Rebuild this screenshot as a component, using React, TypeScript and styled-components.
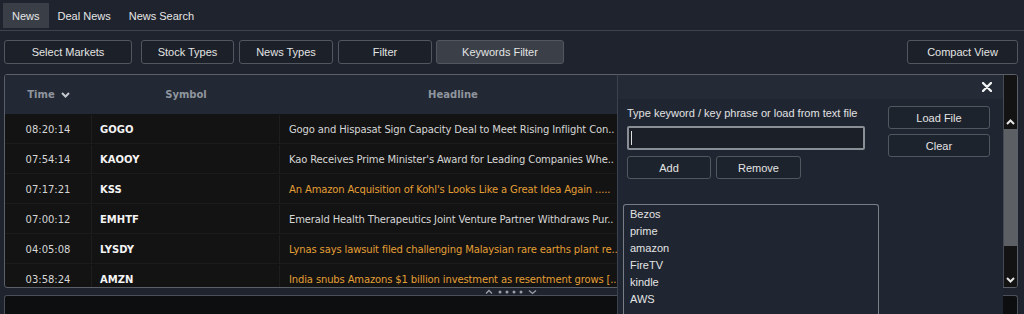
import React from "react";
import styled, { createGlobalStyle } from "styled-components";

const GlobalStyle = createGlobalStyle`
  html, body { margin: 0; padding: 0; background: #1e232d; overflow: hidden; }
  body { font-family: "Liberation Sans", Arial, sans-serif; }
  * { box-sizing: border-box; }
`;

const Page = styled.div`
  position: relative;
  width: 1024px;
  height: 314px;
  display: flex;
  flex-direction: column;
  background: #1e232d;
  overflow: hidden;
`;

const TabBar = styled.div`
  display: flex;
  height: 31px;
  padding: 3px 3px 0;
  border-bottom: 1px solid #3d434d;
`;

const Tab = styled.div<{ $active?: boolean }>`
  height: 25px;
  padding: 0 9px;
  display: flex;
  align-items: center;
  font-size: 11px;
  color: #e6e6e6;
  background: ${(p) => (p.$active ? "#3a3e46" : "transparent")};
`;

const Toolbar = styled.div`
  display: flex;
  gap: 5px;
  height: 24px;
  margin-top: 9px;
  padding: 0 6px 0 4px;
`;

const ToolButton = styled.div<{ $w: number; $active?: boolean; $push?: boolean; $extra?: number }>`
  width: ${(p) => p.$w}px;
  height: 24px;
  display: flex;
  align-items: center;
  justify-content: center;
  border: 1px solid #51565f;
  border-radius: 3px;
  background: ${(p) => (p.$active ? "#3a3f48" : "#1b2029")};
  color: #e4e4e4;
  font-size: 11px;
  margin-left: ${(p) => (p.$push ? "auto" : "0")};
  margin-right: ${(p) => p.$extra ?? 0}px;
`;

const TablePanel = styled.div`
  display: flex;
  height: 214px;
  margin: 10px 6px 0 4px;
  border: 1px solid #5a5f68;
  border-radius: 3px;
  background: #131313;
  overflow: hidden;
`;

const TableMain = styled.div`
  flex: 1;
  display: flex;
  flex-direction: column;
  overflow: hidden;
`;

const cols = "87px 188px 346px 1fr";

const HeaderRow = styled.div`
  display: grid;
  grid-template-columns: ${cols};
  height: 39px;
  flex-shrink: 0;
  background: #232934;
  align-items: center;
  font-family: "DejaVu Sans", Verdana, sans-serif;
  font-weight: bold;
  font-size: 10px;
  color: #8f959e;
`;

const HeaderCell = styled.div`
  display: flex;
  align-items: center;
  justify-content: center;
  gap: 6px;
`;

const Row = styled.div`
  display: grid;
  grid-template-columns: ${cols};
  height: 30px;
  flex-shrink: 0;
  padding-top: 1px;
  border-bottom: 1px solid #1b1b1b;
  font-family: "DejaVu Sans", Verdana, sans-serif;
  font-size: 10px;
`;

const Cell = styled.div<{ $align?: string; $pad?: number; $bold?: boolean; $color?: string; $sep?: boolean }>`
  display: flex;
  align-items: center;
  justify-content: ${(p) => p.$align ?? "flex-start"};
  padding-left: ${(p) => p.$pad ?? 0}px;
  font-weight: ${(p) => (p.$bold ? "bold" : "normal")};
  color: ${(p) => p.$color ?? "#d6d6d6"};
  border-right: ${(p) => (p.$sep ? "1px solid #1e1e1e" : "none")};
  white-space: nowrap;
`;

const HeadlineCell = styled.div<{ $color: string }>`
  padding-left: 9px;
  line-height: 29px;
  letter-spacing: -0.14px;
  color: ${(p) => p.$color};
  white-space: nowrap;
`;

const Scrollbar = styled.div`
  width: 14px;
  flex-shrink: 0;
  display: flex;
  flex-direction: column;
  border-left: 1px solid #454a53;
  background: #131313;
`;

const ScrollCorner = styled.div`
  height: 39px;
`;

const ScrollArrow = styled.div`
  height: 15px;
  display: flex;
  align-items: center;
  justify-content: center;
`;

const ScrollThumb = styled.div`
  height: 117px;
  background: #5c5f64;
`;

const ScrollTrack = styled.div`
  flex: 1;
`;

const Splitter = styled.div`
  height: 7px;
  display: flex;
  align-items: center;
  justify-content: center;
  margin: 0 6px 0 4px;
`;

const BottomPanel = styled.div`
  flex: 1;
  margin: 0 6px 0 4px;
  border: 1px solid #4a4f58;
  border-bottom: none;
  border-radius: 3px 3px 0 0;
  background: #0d0e10;
`;

const Popup = styled.div`
  position: absolute;
  left: 617px;
  top: 74px;
  width: 386px;
  bottom: 0;
  display: flex;
  flex-direction: column;
  background: #1f2632;
  border-left: 1px solid #3b4350;
  border-top: 1px solid #5a5f68;
`;

const PopupHeader = styled.div`
  height: 24px;
  display: flex;
  align-items: center;
  justify-content: flex-end;
  padding-right: 11px;
  background: #242b37;
`;

const PopupBody = styled.div`
  flex: 1;
  display: flex;
  flex-direction: column;
`;

const TopSection = styled.div`
  display: flex;
  padding: 7px 0 0 9px;
`;

const LeftCol = styled.div`
  width: 238px;
  display: flex;
  flex-direction: column;
`;

const Label = styled.div`
  font-size: 11px;
  line-height: 14px;
  color: #e2e2e2;
  white-space: nowrap;
`;

const InputBox = styled.div`
  height: 24px;
  margin-top: 6px;
  border: 2px solid #8a8e95;
  border-radius: 2px;
  background: #1a1f28;
  display: flex;
  align-items: center;
  padding-left: 2px;
`;

const Caret = styled.span`
  width: 1px;
  height: 14px;
  background: #e0e0e0;
`;

const ButtonRow = styled.div`
  display: flex;
  gap: 5px;
  margin-top: 6px;
`;

const PanelButton = styled.div<{ $w: number }>`
  width: ${(p) => p.$w}px;
  height: 23px;
  display: flex;
  align-items: center;
  justify-content: center;
  border: 1px solid #51565f;
  border-radius: 3px;
  background: #1d232d;
  color: #e4e4e4;
  font-size: 11px;
`;

const RightCol = styled.div`
  margin-left: 23px;
  display: flex;
  flex-direction: column;
  gap: 5px;
`;

const ListBox = styled.div`
  flex: 1;
  width: 256px;
  margin: 25px 0 0 5px;
  padding: 1px 6px;
  border: 1px solid #787d86;
  border-bottom: none;
  border-radius: 3px 3px 0 0;
  background: #1f2632;
`;

const ListItem = styled.div`
  font-size: 11px;
  line-height: 17px;
  color: #e4e4e4;
`;

const Chevron = ({ up, color = "#d0d4da" }: { up?: boolean; color?: string }) => (
  <svg width="9" height="6" viewBox="0 0 9 6">
    <polyline
      points={up ? "1,5 4.5,1.5 8,5" : "1,1 4.5,4.5 8,1"}
      fill="none"
      stroke={color}
      strokeWidth="2"
    />
  </svg>
);

const CloseIcon = () => (
  <svg width="10" height="10" viewBox="0 0 10 10">
    <path d="M1,1 L9,9 M9,1 L1,9" stroke="#f2f2f2" strokeWidth="2.4" strokeLinecap="round" />
  </svg>
);

const SplitIcon = () => (
  <svg width="52" height="7" viewBox="0 0 52 7">
    <polyline points="1,5.5 4,2.5 7,5.5" fill="none" stroke="#9aa0a8" strokeWidth="1.3" />
    <circle cx="15" cy="4" r="1.5" fill="#9aa0a8" />
    <circle cx="22" cy="4" r="1.5" fill="#9aa0a8" />
    <circle cx="29" cy="4" r="1.5" fill="#9aa0a8" />
    <circle cx="36" cy="4" r="1.5" fill="#9aa0a8" />
    <polyline points="44,2.5 47.5,5.5 51,2.5" fill="none" stroke="#9aa0a8" strokeWidth="1.3" />
  </svg>
);

const WHITE = "#d6d6d6";
const ORANGE = "#e39f35";

const rows = [
  { t: "08:20:14", s: "GOGO", h: "Gogo and Hispasat Sign Capacity Deal to Meet Rising Inflight Con..", c: WHITE },
  { t: "07:54:14", s: "KAOOY", h: "Kao Receives Prime Minister's Award for Leading Companies Whe..", c: WHITE },
  { t: "07:17:21", s: "KSS", h: "An Amazon Acquisition of Kohl's Looks Like a Great Idea Again .....", c: ORANGE },
  { t: "07:00:12", s: "EMHTF", h: "Emerald Health Therapeutics Joint Venture Partner Withdraws Pur..", c: WHITE },
  { t: "04:05:08", s: "LYSDY", h: "Lynas says lawsuit filed challenging Malaysian rare earths plant re..", c: ORANGE },
  { t: "03:58:24", s: "AMZN", h: "India snubs Amazons $1 billion investment as resentment grows [..", c: ORANGE },
];

const keywords = ["Bezos", "prime", "amazon", "FireTV", "kindle", "AWS"];

export default function App() {
  return (
    <>
      <GlobalStyle />
      <Page>
        <TabBar>
          <Tab $active>News</Tab>
          <Tab>Deal News</Tab>
          <Tab>News Search</Tab>
        </TabBar>
        <Toolbar>
          <ToolButton $w={128} $extra={4}>Select Markets</ToolButton>
          <ToolButton $w={93}>Stock Types</ToolButton>
          <ToolButton $w={94}>News Types</ToolButton>
          <ToolButton $w={94} $extra={-1}>Filter</ToolButton>
          <ToolButton $w={128} $active>Keywords Filter</ToolButton>
          <ToolButton $w={111} $push>Compact View</ToolButton>
        </Toolbar>
        <TablePanel>
          <TableMain>
            <HeaderRow>
              <HeaderCell>
                Time
                <Chevron color="#c4c8ce" />
              </HeaderCell>
              <HeaderCell>Symbol</HeaderCell>
              <HeaderCell>Headline</HeaderCell>
              <HeaderCell />
            </HeaderRow>
            {rows.map((r) => (
              <Row key={r.t}>
                <Cell $align="center" $sep>{r.t}</Cell>
                <Cell $pad={8} $bold $color="#f4f4f4" $sep>{r.s}</Cell>
                <HeadlineCell $color={r.c}>{r.h}</HeadlineCell>
                <Cell />
              </Row>
            ))}
          </TableMain>
          <Scrollbar>
            <ScrollCorner />
            <ScrollArrow>
              <Chevron up color="#e6e6e6" />
            </ScrollArrow>
            <ScrollThumb />
            <ScrollTrack />
            <ScrollArrow>
              <Chevron color="#e6e6e6" />
            </ScrollArrow>
          </Scrollbar>
        </TablePanel>
        <Splitter>
          <SplitIcon />
        </Splitter>
        <BottomPanel />
        <Popup>
          <PopupHeader>
            <CloseIcon />
          </PopupHeader>
          <PopupBody>
            <TopSection>
              <LeftCol>
                <Label>Type keyword / key phrase or load from text file</Label>
                <InputBox>
                  <Caret />
                </InputBox>
                <ButtonRow>
                  <PanelButton $w={84}>Add</PanelButton>
                  <PanelButton $w={85}>Remove</PanelButton>
                </ButtonRow>
              </LeftCol>
              <RightCol>
                <PanelButton $w={102}>Load File</PanelButton>
                <PanelButton $w={102}>Clear</PanelButton>
              </RightCol>
            </TopSection>
            <ListBox>
              {keywords.map((k) => (
                <ListItem key={k}>{k}</ListItem>
              ))}
            </ListBox>
          </PopupBody>
        </Popup>
      </Page>
    </>
  );
}
